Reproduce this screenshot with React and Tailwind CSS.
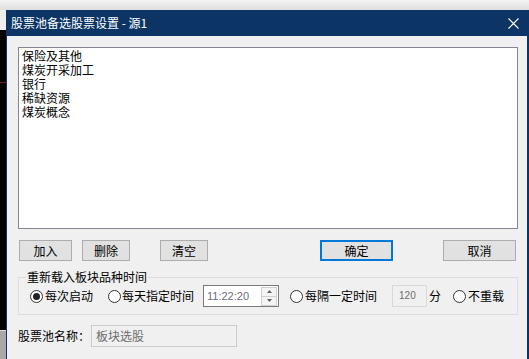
import React from "react";

const F = { fontFamily: '"Noto Sans CJK SC", "Noto Sans", sans-serif' };

function Radio({ checked }) {
  return (
    <span className="w-[13px] h-[13px] rounded-full border border-[#333333] bg-white flex items-center justify-center shrink-0">
      {checked && <span className="w-[7px] h-[7px] rounded-full bg-[#222222]" />}
    </span>
  );
}

function Btn({ children, w, ml, primary }) {
  return (
    <button
      className={
        "h-[21px] bg-[#e1e1e1] text-[12px] text-black flex items-center justify-center leading-none " +
        (primary ? "border-2 border-[#0078d7]" : "border border-[#adadad]")
      }
      style={{ width: w, marginLeft: ml }}
    >
      {children}
    </button>
  );
}

export default function App() {
  const items = ["保险及其他", "煤炭开采加工", "银行", "稀缺资源", "煤炭概念"];
  return (
    <div className="relative w-[529px] h-[359px] overflow-hidden bg-[#eeeeee]" style={F}>
      {/* desktop background */}
      <div className="absolute left-0 top-0 w-[529px] h-[10px] bg-gradient-to-b from-[#f4f4f4] to-[#dedede]" />
      <div className="absolute left-0 top-[30px] w-[6px] h-[300px] bg-black">
        <div className="mt-[52px] h-px bg-[#7a2020]" />
      </div>
      <div className="absolute left-0 top-[330px] w-[6px] h-[29px] bg-[#a8a8a8]">
        <div className="h-px bg-[#dcdcdc]" />
      </div>

      {/* dialog */}
      <div className="absolute left-[6px] top-[10px] w-[523px] h-[349px] flex flex-col bg-[#0c3566]">
        <div className="h-[26px] flex items-center justify-between pl-[5px] pr-[10px] text-white text-[12px] shrink-0">
          <span className="leading-none">股票池备选股票设置 - 源1</span>
          <svg width="11" height="11" viewBox="0 0 11 11" className="mt-px">
            <path d="M0.5 0.5 L10.5 10.5 M10.5 0.5 L0.5 10.5" stroke="white" strokeWidth="1.1" />
          </svg>
        </div>
        <div className="flex-1 ml-px mr-[2px] bg-[#f0f0f0] pl-[11px] pt-[11px] text-black text-[12px]">
          <div className="w-[500px] h-[182px] border border-[#828790] bg-white pl-[3px] pt-px leading-[14px]">
            {items.map((t) => (
              <div key={t}>{t}</div>
            ))}
          </div>

          <div className="flex mt-[11px]">
            <Btn w={53} ml={1}>加入</Btn>
            <Btn w={48} ml={10}>删除</Btn>
            <Btn w={48} ml={30}>清空</Btn>
            <Btn w={73} ml={112} primary>确定</Btn>
            <Btn w={73} ml={50}>取消</Btn>
          </div>

          <fieldset className="mt-[8px] w-[500px] border border-[#dcdcdc] px-0 pb-[7px]">
            <legend className="ml-[7px] px-px leading-[16px] text-[12px]">重新载入板块品种时间</legend>
            <div className="flex items-center h-[22px]">
              <span className="ml-[11px]"><Radio checked /></span>
              <span className="ml-[2px] leading-none">每次启动</span>
              <span className="ml-[15px]"><Radio /></span>
              <span className="ml-[1px] leading-none">每天指定时间</span>
              <div className="ml-[9px] w-[76px] h-[22px] border border-[#7a7a7a] bg-white flex items-center">
                <span className="ml-[3px] text-[11px] text-[#6c6c84] leading-none" style={{ fontFamily: '"Liberation Sans", Arial, sans-serif' }}>
                  11:22:20
                </span>
                <div className="ml-auto mr-px w-[16px] h-[19px] flex flex-col border border-[#d0d0d0] bg-[#f4f4f4]">
                  <div className="flex-1 flex items-center justify-center border-b border-[#d0d0d0]">
                    <svg width="5" height="3" viewBox="0 0 5 3"><path d="M0 3 L2.5 0 L5 3 Z" fill="#606060" /></svg>
                  </div>
                  <div className="flex-1 flex items-center justify-center">
                    <svg width="5" height="3" viewBox="0 0 5 3"><path d="M0 0 L2.5 3 L5 0 Z" fill="#606060" /></svg>
                  </div>
                </div>
              </div>
              <span className="ml-[11px]"><Radio /></span>
              <span className="ml-[2px] leading-none">每隔一定时间</span>
              <div className="ml-[15px] w-[35px] h-[22px] border border-[#d9d9d9] bg-[#f0f0f0] flex items-center">
                <span className="ml-[6px] text-[10px] text-[#6d6d6d] leading-none" style={{ fontFamily: '"Liberation Sans", Arial, sans-serif' }}>120</span>
              </div>
              <span className="ml-[2px] leading-none">分</span>
              <span className="ml-[12px]"><Radio /></span>
              <span className="ml-[2px] leading-none">不重载</span>
            </div>
          </fieldset>

          <div className="flex items-center mt-[10px] h-[22px]">
            <span className="w-[73px] leading-none">股票池名称：</span>
            <div className="w-[146px] h-[22px] border border-[#cccccc] bg-[#f0f0f0] flex items-center pl-[4px] text-[#6d6d6d] leading-none">
              板块选股
            </div>
          </div>
        </div>
      </div>
    </div>
  );
}
